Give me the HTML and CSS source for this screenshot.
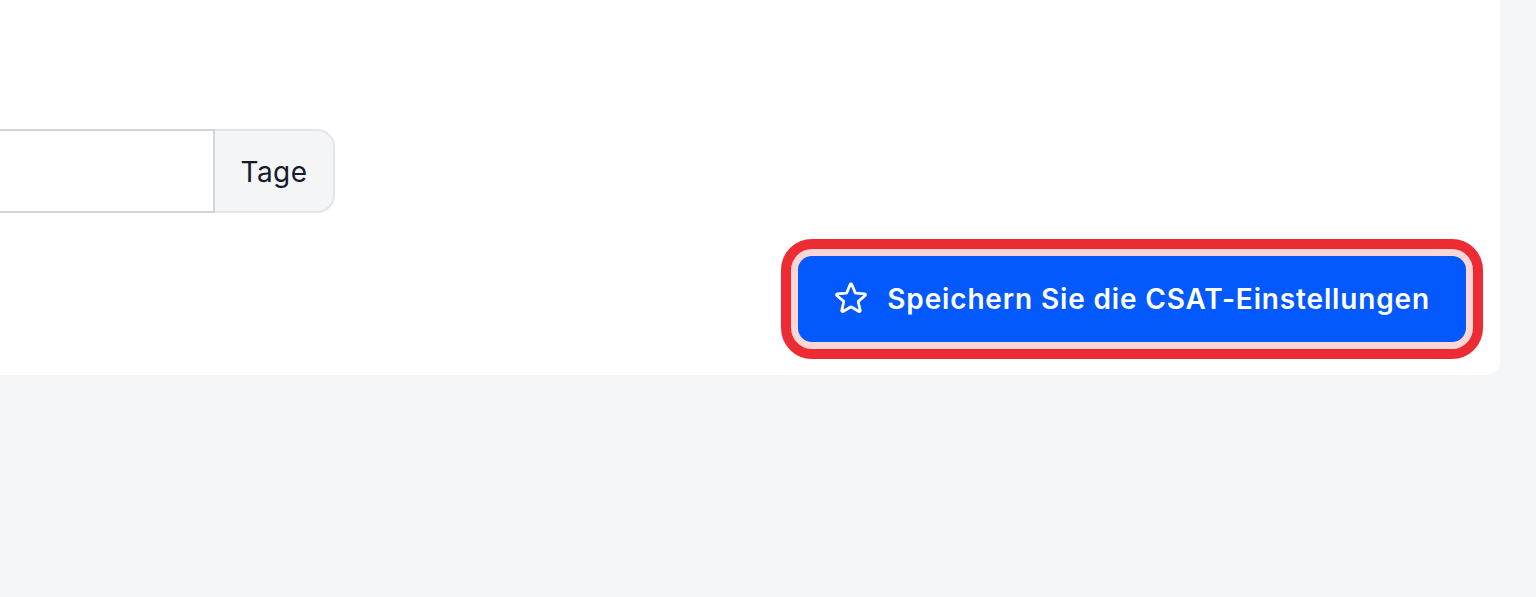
FILE: index.html
```html
<!DOCTYPE html>
<html lang="de">
<head>
<meta charset="utf-8">
<title>CSAT</title>
<link rel="stylesheet" href="styles.css">
</head>
<body>
<div class="card">
  <div class="input-group">
    <input class="input" type="text" value="">
    <span class="addon">Tage</span>
  </div>
  <div class="actions">
    <button class="btn" type="button">
      <svg class="icon" viewBox="0 0 24 24" fill="none" stroke="currentColor" stroke-width="1.75" stroke-linecap="round" stroke-linejoin="round"><path d="M11.48 3.499a.562.562 0 0 1 1.04 0l2.125 5.111a.563.563 0 0 0 .475.345l5.518.442c.499.04.701.663.321.988l-4.204 3.602a.563.563 0 0 0-.182.557l1.285 5.385a.562.562 0 0 1-.84.61l-4.725-2.885a.562.562 0 0 0-.586 0L6.982 20.54a.562.562 0 0 1-.84-.61l1.285-5.386a.562.562 0 0 0-.182-.557l-4.204-3.602a.562.562 0 0 1 .321-.988l5.518-.442a.563.563 0 0 0 .475-.345L11.48 3.5Z"/></svg>
      <span>Speichern Sie die CSAT-Einstellungen</span>
    </button>
  </div>
</div>
</body>
</html>
```
FILE: styles.css
```css
html, body {
  margin: 0;
  padding: 0;
}
body {
  background: #f5f6f8;
  font-family: Inter, "Noto Sans", sans-serif;
  width: 1536px;
  height: 597px;
  overflow: hidden;
}
.card {
  box-sizing: border-box;
  width: 1500px;
  height: 375px;
  background: #ffffff;
  border-bottom-right-radius: 14px;
  padding: 129px 34px 0 0;
}
.input-group {
  display: flex;
  height: 84px;
  width: 335px;
}
.input {
  box-sizing: border-box;
  flex: 0 0 215px;
  width: 215px;
  height: 84px;
  margin: 0;
  padding: 0 20px;
  border: 2px solid #d3d5da;
  border-left: none;
  border-radius: 0;
  background: #ffffff;
  font: inherit;
  outline: none;
}
.addon {
  box-sizing: border-box;
  flex: 0 0 120px;
  height: 84px;
  display: flex;
  align-items: center;
  justify-content: center;
  padding-top: 2px;
  background: #f4f5f7;
  border: 2px solid #e3e5e9;
  border-left: none;
  border-radius: 0 18px 18px 0;
  font-size: 28px;
  letter-spacing: 0.4px;
  color: #161b2c;
}
.actions {
  display: flex;
  justify-content: flex-end;
  margin-top: 43px;
}
.btn {
  box-sizing: border-box;
  height: 86px;
  display: flex;
  align-items: center;
  gap: 17px;
  padding: 0 36px 0 34px;
  border: none;
  border-radius: 14px;
  background: #0358fe;
  color: #ffffff;
  font-family: inherit;
  font-size: 28px;
  font-weight: 600;
  letter-spacing: 0.85px;
  box-shadow: 0 0 0 7px #fdd6d7, 0 0 0 17px #ec2c32;
  cursor: pointer;
}
.icon {
  width: 38px;
  height: 38px;
  flex: none;
  margin-top: -2px;
}
```
